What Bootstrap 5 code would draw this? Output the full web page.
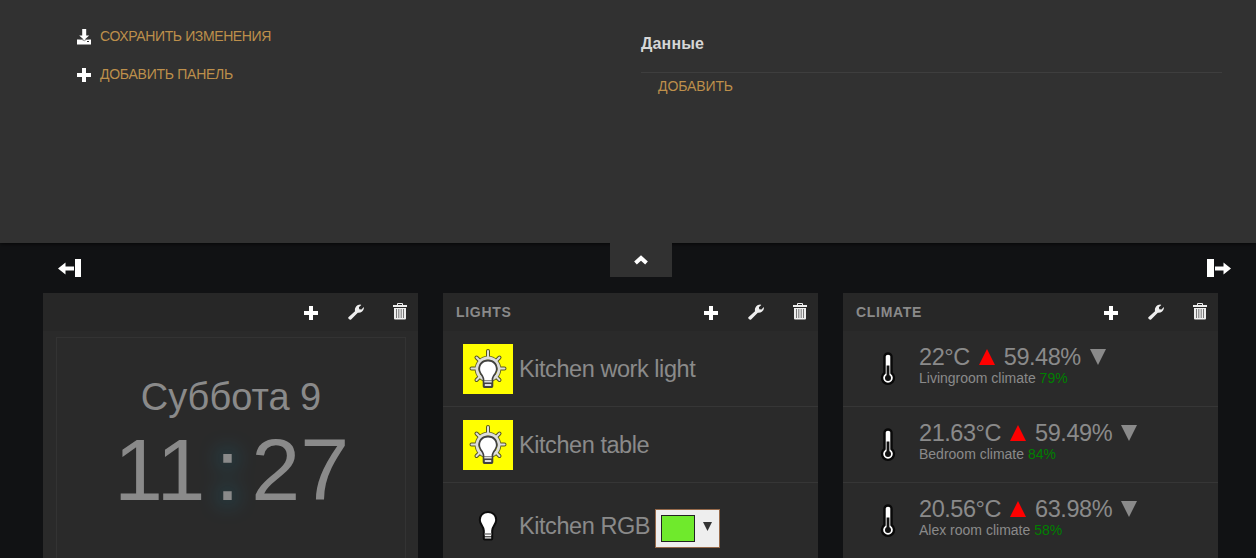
<!DOCTYPE html>
<html lang="ru">
<head>
<meta charset="utf-8">
<title>Dashboard</title>
<link href="https://cdn.jsdelivr.net/npm/bootstrap@5.3.0/dist/css/bootstrap.min.css" rel="stylesheet">
<style>
body{background:#111214;color:#8a8a8a;font-family:"Liberation Sans",Arial,sans-serif;font-size:14px;line-height:20px;height:558px;overflow:hidden}
svg{display:block;flex:none}
.settings{height:243px;background:#313131;box-shadow:0 0 5px #000;position:relative}
.side{width:641px;padding:27px 0 0 77px}
.side a,.data a{color:#bd8f4b;text-decoration:none;text-transform:uppercase;font-size:14px;letter-spacing:-.38px;white-space:nowrap}
.side a{height:20px;margin-bottom:18px;gap:9px}
.side a+a{letter-spacing:-.26px}
.side span{margin-top:-2px}
.data{width:581px;padding-top:32px}
.data h1{font-size:16px;line-height:24px;font-weight:bold;color:#d6d6d6;margin:0;padding-bottom:16px;border-bottom:1px solid #3e3e3e;letter-spacing:.15px}
.data a{display:block;padding:3px 0 0 17px;letter-spacing:-.1px}
.bar{height:50px;padding:0 25px 0 58px}
.bar svg{margin-top:16px}
.toggle{width:62px;height:34px;background:#313131;position:relative;left:-4px}
.bar .toggle svg{margin:-1px 0 0}
.panels{gap:25px;padding-left:43px}
.panel{width:375px;height:290px;background:#2a2a2a;flex:none}
.panel-top{height:38px;background:#272727;padding:0 11px 0 13px;font-weight:bold;font-size:14px;letter-spacing:.7px}
.tools{gap:28px}
.tools svg:first-child{margin:1px 1px 0 0}
.tools svg:last-child{margin-top:-1px}
.item{height:76px;padding:1px 0 0 20px;border-bottom:1px solid #363636;gap:6px;font-size:23.5px;letter-spacing:-.44px;line-height:26px;white-space:nowrap}
.item.tall{height:85px}
.ico{width:50px;height:50px;flex:none}
.ico.lit{background:#ff0}
.reading{margin-top:-9px}
.sub{font-size:14px;line-height:16px;letter-spacing:0}
.good{color:#008000}
.val{gap:9px}
.clock{margin:6px 12px 0 13px;height:240px;border:1px solid #333;padding-top:36px}
.day{font-size:38px;line-height:46px;text-align:center}
.time{font-size:88px;line-height:99px;padding-left:57px}
.colon{width:24px;margin:0 12px 0 10px;text-shadow:0 0 22px rgba(0,190,240,.75)}
.picker{width:65px;height:39px;background:#eee;border:1px solid #95694a;padding-left:5px;gap:8px;margin:5px 0 0 -1px}
.picker svg{margin-top:-3px}
.swatch{width:34px;height:27px;background:#6fea2c;border:1px solid #222}
</style>
<script src="https://cdn.jsdelivr.net/npm/bootstrap@5.3.0/dist/js/bootstrap.bundle.min.js"></script>
</head>
<body>
<svg width="0" height="0" class="position-absolute">
<defs>
<symbol id="plus" viewBox="0 0 14 14"><path fill="#fff" d="M5 0h4v5h5v4H9v5H5V9H0V5h5z"/></symbol>
<symbol id="wrench" viewBox="0 0 16 16"><path fill="#eee" d="M.4 13.2 7 7.2C6.400 4 8.600.7 12.200.5L13.300 1 10.900 3.200l.4 2 2.200.2L15.800 3l.1 1.200C15.600 7 13 9 9.800 8.700L3.100 15.400C2 16.400-.5 14.700.4 13.200Z"/></symbol>
<symbol id="trash" viewBox="0 0 14 17"><path fill="none" stroke="#eee" d="M4.500 2.500v-2h5v2"/><path fill="#eee" d="M0 2h14v2H0zM1 5h12v10.500q0 1-1 1H2q-1 0-1-1z"/><path stroke="#777" d="M3.500 6v9m2.300-9v9m2.400-9v9m2.300-9v9"/></symbol>
<symbol id="lit" viewBox="0 0 50 50"><g stroke-linecap="round" fill="none"><path stroke="#55551c" stroke-width="4" d="M25 7v6M8.500 24.500H14M36 24.500h5.500M13.500 13.500l4 4M36.500 13.500l-4 4M13.500 36l4-4M36.500 36l-4-4"/><circle cx="25" cy="25" r="11.500" stroke="#66661c" stroke-width="3.500"/><path stroke="#ddd" stroke-width="2" d="M25 7v6M8.500 24.500H14M36 24.500h5.500M13.500 13.500l4 4M36.500 13.500l-4 4M13.500 36l4-4M36.500 36l-4-4"/><circle cx="25" cy="25" r="11" stroke="#ddd" stroke-width="2.800"/></g><path d="M25 15.500c-6 0-9.600 4.200-9.600 9.300 0 4.900 4.300 6.900 4.300 11v6.500q0 1.700 1.700 1.700h7.200q1.700 0 1.700-1.700v-6.500c0-4.100 4.300-6.100 4.300-11 0-5.100-3.600-9.300-9.600-9.300z" fill="#414141"/><path d="M25 17.500c-4.900 0-7.900 3.300-7.900 7.400 0 4.300 4.300 6.300 4.300 11h7.200c0-4.700 4.300-6.700 4.300-11 0-4.100-3-7.400-7.900-7.400z" fill="#fff"/><path d="M21.300 37.500h7.400M21.800 41h6.400" stroke="#ddd" stroke-width="1.800"/></symbol>
<symbol id="off" viewBox="0 0 50 50"><path d="M25 11c-5.200 0-8.200 3.700-8.200 8 0 4.500 4 6.500 4 10.500v8q0 1 1 1h6.400q1 0 1-1v-8c0-4 4-6 4-10.500 0-4.300-3-8-8.200-8z" fill="#fff" stroke="#0c0c0c" stroke-width="2"/><path d="M21 33h8" stroke="#666" stroke-width="1.300"/><path d="M21 35.800h8" stroke="#111" stroke-width="1"/></symbol>
<symbol id="thermo" viewBox="0 0 50 50"><path d="M21.500 12.500a3.500 3 0 0 1 7 0v16.500a6 6 0 1 1-7 0z" fill="#fff" stroke="#080808" stroke-width="2.400"/><path d="M25 21.500V33" stroke="#111" stroke-width="2.800"/><circle cx="25" cy="34" r="3" fill="#111"/></symbol>
<symbol id="up" viewBox="0 0 16 16"><path d="M8 0l8 16H0z" fill="red"/></symbol>
<symbol id="down" viewBox="0 0 16 16"><path d="M8 16l8-16H0z" fill="#8a8a8a"/></symbol>
</defs></svg>
<section class="settings d-flex">
<nav class="side d-flex flex-column">
<a href="#" class="d-flex align-items-center"><svg width="14" height="16"><path fill="#fff" d="M5.200 0h4v6.500h3L7.200 11 2.200 6.500h3zM0 10.500h14v5H0z"/><path fill="none" stroke="#777" stroke-width=".8" d="M2.500 10.300h2.200l2.500 1.500 2.500-1.500h2"/><path fill="#333" d="M10 12h2v1h-2z"/></svg><span>Сохранить изменения</span></a>
<a href="#" class="d-flex align-items-center"><svg width="14" height="14"><use href="#plus"/></svg><span>Добавить панель</span></a>
</nav>
<div class="data"><h1>Данные</h1><a href="#">Добавить</a></div>
</section>
<div class="bar d-flex justify-content-between">
<svg width="24" height="18"><path fill="#fff" d="M17 0h6v18h-6zM0 9.500 7.500 3.500v4H16v4H7.500v4z"/></svg>
<div class="toggle d-flex align-items-center justify-content-center"><svg width="16" height="12"><path d="m2.500 9 5.500-5 5.500 5" fill="none" stroke="#fff" stroke-width="4"/></svg></div>
<svg width="24" height="18"><path fill="#fff" d="M0 0h7v18H0zM24 9.500l-7.500-6v4H8v4h8.500v4z"/></svg>
</div>
<main class="panels d-flex">
<section class="panel">
<div class="panel-top d-flex align-items-center justify-content-end"><div class="tools d-flex align-items-center"><svg width="14" height="14"><use href="#plus"/></svg><svg width="18" height="16"><use href="#wrench"/></svg><svg width="14" height="17"><use href="#trash"/></svg></div></div>
<div class="clock"><div class="day">Суббота 9</div><div class="time d-flex"><span>11</span><span class="colon">:</span><span>27</span></div></div>
</section>
<section class="panel">
<div class="panel-top d-flex align-items-center justify-content-between"><span>LIGHTS</span><div class="tools d-flex align-items-center"><svg width="14" height="14"><use href="#plus"/></svg><svg width="18" height="16"><use href="#wrench"/></svg><svg width="14" height="17"><use href="#trash"/></svg></div></div>
<div class="item d-flex align-items-center"><svg class="ico lit"><use href="#lit"/></svg>Kitchen work light</div>
<div class="item d-flex align-items-center"><svg class="ico lit"><use href="#lit"/></svg>Kitchen table</div>
<div class="item tall d-flex align-items-center"><svg class="ico"><use href="#off"/></svg>Kitchen RGB<div class="picker d-flex align-items-center"><div class="swatch"></div><svg width="9" height="9"><path d="M0 0h9L4.500 9z" fill="#333"/></svg></div></div>
</section>
<section class="panel">
<div class="panel-top d-flex align-items-center justify-content-between"><span>CLIMATE</span><div class="tools d-flex align-items-center"><svg width="14" height="14"><use href="#plus"/></svg><svg width="18" height="16"><use href="#wrench"/></svg><svg width="14" height="17"><use href="#trash"/></svg></div></div>
<div class="item d-flex align-items-center"><svg class="ico"><use href="#thermo"/></svg><div class="reading"><div class="val d-flex align-items-center">22°C <svg width="16" height="16"><use href="#up"/></svg> 59.48% <svg width="16" height="16"><use href="#down"/></svg></div><div class="sub">Livingroom climate <span class="good">79%</span></div></div></div>
<div class="item d-flex align-items-center"><svg class="ico"><use href="#thermo"/></svg><div class="reading"><div class="val d-flex align-items-center">21.63°C <svg width="16" height="16"><use href="#up"/></svg> 59.49% <svg width="16" height="16"><use href="#down"/></svg></div><div class="sub">Bedroom climate <span class="good">84%</span></div></div></div>
<div class="item d-flex align-items-center"><svg class="ico"><use href="#thermo"/></svg><div class="reading"><div class="val d-flex align-items-center">20.56°C <svg width="16" height="16"><use href="#up"/></svg> 63.98% <svg width="16" height="16"><use href="#down"/></svg></div><div class="sub">Alex room climate <span class="good">58%</span></div></div></div>
</section>
</main>
</body>
</html>
